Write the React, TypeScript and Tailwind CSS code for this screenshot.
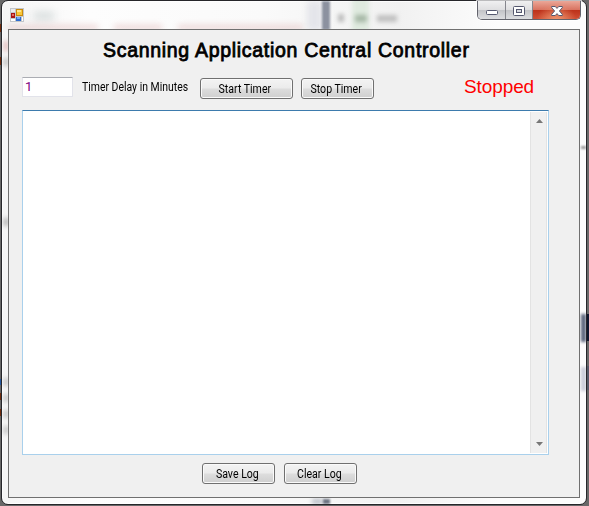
import React from "react";

type BtnProps = { label: string; className: string };

function FormButton({ label, className }: BtnProps) {
  return (
    <button
      className={`flex h-[21px] items-center justify-center rounded-[3px] border border-[#707070] bg-[linear-gradient(#f3f3f3_0%,#ebebeb_48%,#dddddd_52%,#cfcfcf_100%)] pr-[3px] pt-px font-[Roboto,sans-serif] text-[12px] leading-none whitespace-nowrap shadow-[inset_0_0_0_1px_#fafafa] ${className}`}
    >
      <span className="scale-x-[0.88]">{label}</span>
    </button>
  );
}

function AppIcon() {
  return (
    <svg width="14" height="14" viewBox="0 0 14 14" shapeRendering="crispEdges">
      <rect width="14" height="14" fill="#c3c6ca" />
      <rect x="1" y="1" width="4" height="3" fill="#e9ebee" />
      <rect x="1" y="11" width="4" height="2" fill="#fff" />
      <rect x="1" y="5" width="4" height="5" fill="#a91313" />
      <rect x="2" y="6" width="2" height="2" fill="#e56a60" />
      <rect x="6" y="1" width="7" height="7" fill="#c98a0c" />
      <rect x="7" y="2" width="5" height="5" fill="#f9c738" />
      <rect x="7" y="2" width="4" height="2" fill="#ffe48a" />
      <rect x="6" y="9" width="5" height="4" fill="#2e6bd0" />
      <rect x="7" y="9" width="3" height="2" fill="#77a9f2" />
      <rect x="12" y="9" width="1" height="4" fill="#fff" />
    </svg>
  );
}

function CaptionButtons() {
  return (
    <div className="-mr-px flex h-[19px] w-[104px] overflow-hidden rounded-b-[5px] border border-t-0 border-[#62636c] shadow-[0_0_0_1px_#ffffffb0]">
      <div className="flex w-[27px] items-center justify-center bg-[linear-gradient(#f0f0f1_0%,#dfdfe1_48%,#c3c4c8_52%,#dcdde0_100%)] pt-[5px]">
        <svg width="12" height="5" viewBox="0 0 12 5">
          <rect x=".5" y=".5" width="11" height="4" rx="1" fill="#fff" stroke="#55586f" />
        </svg>
      </div>
      <div className="flex w-[28px] items-center justify-center border-x border-[#85868d] bg-[linear-gradient(#f0f0f1_0%,#dfdfe1_48%,#c3c4c8_52%,#dcdde0_100%)] pt-px">
        <svg width="12" height="10" viewBox="0 0 12 10">
          <rect x=".5" y=".5" width="11" height="9" rx="1" fill="#fff" stroke="#55586f" />
          <rect x="3.5" y="3.5" width="5" height="3" fill="#d8d9df" stroke="#55586f" />
        </svg>
      </div>
      <div className="flex flex-1 items-center justify-center bg-[radial-gradient(ellipse_at_50%_110%,#f09a72_0%,#d6543a00_60%),linear-gradient(#eba798_0%,#d97461_48%,#bd321b_52%,#cf4e34_100%)] pt-px">
        <svg width="12" height="10" viewBox="0 0 12 10">
          <path d="M.7.5h3.6L6 2.4 7.7.5h3.6v1.2L8.4 5l2.9 3.3v1.2H7.7L6 7.6 4.3 9.5H.7V8.3L3.6 5 .7 1.7z" fill="#fff" stroke="#55586f" strokeWidth="1" />
        </svg>
      </div>
    </div>
  );
}

function GlassReflections() {
  return (
    <div className="pointer-events-none absolute inset-0 flex flex-col justify-between overflow-hidden rounded-[5px]">
      <div className="flex h-[29px] overflow-hidden">
        <div className="flex w-[305px] flex-col justify-between pt-[12px]">
          <div className="ml-[32px] h-[6px] w-[20px] bg-[#ccd4d4] blur-[4px]" />
          <div className="flex h-[5px] gap-[16px] pl-[6px] opacity-40">
            <div className="w-[90px] bg-[#d99c9c] blur-[3px]" />
            <div className="w-[48px] bg-[#d99c9c] blur-[3px]" />
            <div className="w-[125px] bg-[#d99c9c] blur-[3px]" />
          </div>
        </div>
        <div className="w-[15px] bg-[#e4e5ea] blur-[3px]" />
        <div className="w-[8px] bg-[#8c919f] blur-[1px]" />
        <div className="flex w-[80px] items-center gap-[8px] pl-[8px] pt-[5px]">
          <div className="h-[8px] w-[6px] bg-[#bbb] blur-[2px]" />
          <div className="flex h-[40px] w-[17px] items-center justify-center bg-[#dfeadf] blur-[2px]">
            <div className="h-[7px] w-[12px] bg-[#a3b5a3] blur-[1px]" />
          </div>
          <div className="h-[7px] w-[20px] bg-[#c0c0c0] blur-[2px]" />
        </div>
      </div>
      <div className="flex flex-1 justify-between">
        <div className="flex w-[6px] flex-col pl-[2px] pt-[11px]">
          <div className="h-[10px] bg-[#e2b8b8] blur-[2px]" />
          <div className="mt-[7px] h-[8px] bg-[#bbb] blur-[2px]" />
          <div className="mt-[152px] h-[8px] bg-[#aaa] blur-[2px]" />
          <div className="mt-[152px] flex flex-col gap-[8px]">
            <div className="h-[8px] bg-[#bbb] blur-[2px]" />
            <div className="h-[8px] bg-[#bbb] blur-[2px]" />
            <div className="h-[8px] bg-[#bbb] blur-[2px]" />
            <div className="h-[8px] bg-[#bbb] blur-[2px]" />
          </div>
        </div>
        <div className="flex w-[5px] flex-col pt-[116px]">
          <div className="h-[3px] bg-[#999] blur-[1px]" />
          <div className="mt-[165px] h-[28px] bg-[#59637a] blur-[1.5px]" />
          <div className="mt-[25px] h-[24px] bg-[#c9cbd8] blur-[1.5px]" />
        </div>
      </div>
      <div className="flex h-[5px] pl-[310px]">
        <div className="w-[11px] bg-[#b9bdc6] blur-[2px]" />
        <div className="w-[7px] bg-[#6d7482] blur-[1px]" />
      </div>
    </div>
  );
}

export default function App() {
  return (
    <div className="flex h-[506px] w-[589px] overflow-hidden bg-[#686868] font-['Liberation_Sans',sans-serif] text-black">
      <div className="flex w-px shrink-0 flex-col pt-[24px]">
        <div className="h-[8px] bg-[#702b0c]" />
        <div className="mt-[25px] h-[8px] bg-[#702b0c]" />
        <div className="mt-[314px] h-[6px] bg-[#2458a0]" />
        <div className="mt-[8px] h-[7px] bg-[#702b0c]" />
        <div className="mt-[9px] h-[7px] bg-[#702b0c]" />
      </div>

      <main className="relative flex h-[505px] w-[586px] shrink-0 flex-col rounded-[7px] border border-[#26262a] bg-[linear-gradient(90deg,#f5f5f5,#fdfdfd_15%,#fafafa_45%,#f1f1f1_68%,#fcfcfc_85%)] px-[6px] shadow-[inset_0_0_0_1px_#ffffffd0]">
        <GlassReflections />
        <header className="relative flex h-[28px] shrink-0 justify-between">
          <div className="ml-[2px] mt-[7px]">
            <AppIcon />
          </div>
          <CaptionButtons />
        </header>

        <section className="relative h-[469px] shrink-0 border border-[#707070] bg-[#f0f0f0] pl-[13px]">
          <h1 className="flex h-[47px] items-center whitespace-nowrap pb-[6px] pl-[81px] text-[19.5px] leading-none tracking-[0.7px] [-webkit-text-stroke:0.8px_black]">
            Scanning Application Central Controller
          </h1>
          <div className="flex h-[33px] items-start">
            <input
              readOnly
              value="1"
              className="h-[20px] w-[51px] border border-[#e2e3ea] border-t-[#abadb3] bg-white px-[2px] pb-px font-[Roboto,sans-serif] text-[13px] leading-none text-[#800080] outline-none"
            />
            <label className="ml-[9px] mt-[3px] w-[118px] origin-left scale-x-[0.87] whitespace-nowrap font-[Roboto,sans-serif] text-[12px] leading-[14px]">Timer Delay in Minutes</label>
            <FormButton label="Start Timer" className="mt-px w-[93px]" />
            <FormButton label="Stop Timer" className="ml-[8px] mt-px w-[73px]" />
            <span className="ml-[90px] whitespace-nowrap text-[19px] leading-[19px] tracking-[-0.1px] text-[#ff0000]">Stopped</span>
          </div>
          <div className="flex h-[345px] w-[527px] justify-end border border-[#a9d0ec] border-t-[#3d7bad] bg-white p-px">
            <div className="flex w-[17px] flex-col items-center justify-between border-x border-[#e3e3e3] bg-[#f0f0f0] py-[7px] pl-[2px]">
              <svg width="7" height="4" viewBox="0 0 7 4">
                <path d="M3.5 0L7 4H0z" fill="#777" />
              </svg>
              <svg width="7" height="4" viewBox="0 0 7 4">
                <path d="M0 0h7L3.5 4z" fill="#777" />
              </svg>
            </div>
          </div>
          <div className="flex gap-[9px] pl-[180px] pt-[8px]">
            <FormButton label="Save Log" className="w-[73px]" />
            <FormButton label="Clear Log" className="w-[73px]" />
          </div>
        </section>
      </main>

      <div className="flex w-[2px] shrink-0 flex-col pt-[314px]">
        <div className="h-[27px] bg-[#10182f]" />
        <div className="mt-[25px] h-[24px] bg-[#585a69]" />
      </div>
    </div>
  );
}
